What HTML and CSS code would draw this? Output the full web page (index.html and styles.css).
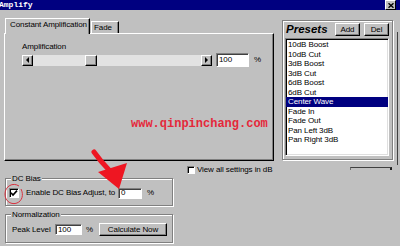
FILE: index.html
```html
<!DOCTYPE html>
<html>
<head>
<meta charset="utf-8">
<title>Amplify</title>
<link rel="stylesheet" href="styles.css">
</head>
<body>
<div class="titlebar">
  <span class="title">Amplify</span>
  <span class="close"><svg width="6" height="5" viewBox="0 0 6 5"><path d="M0.5 0.3 L5.5 4.7 M5.5 0.3 L0.5 4.7" stroke="#000" stroke-width="1.4"/></svg></span>
</div>
<div class="main">
  <div class="left">
    <div class="tabs">
      <div class="tab active">Constant Amplification</div>
      <div class="tab fade">Fade</div>
    </div>
    <div class="panel">
      <div class="label">Amplification</div>
      <div class="amp-row">
        <div class="scrollbar">
          <div class="sbtn"><span class="tri-left"></span></div>
          <div class="track"><div class="thumb"></div></div>
          <div class="sbtn"><span class="tri-right"></span></div>
        </div>
        <div class="field amp-field">100</div>
        <span class="pct">%</span>
      </div>
      <div class="watermark">www.qinpinchang.com</div>
    </div>
    <div class="viewall"><span class="check small"></span><span>View all settings in dB</span></div>
    <div class="group dc">
      <div class="group-title">DC Bias</div>
      <div class="group-row">
        <span class="check checked"><svg width="8" height="8" viewBox="0 0 8 8"><path d="M1 3.8 L3 6 L7 1.6" fill="none" stroke="#000" stroke-width="1.6"/></svg></span>
        <span class="cb-label">Enable DC Bias Adjust, to</span>
        <span class="field dc-field">0</span>
        <span class="pct">%</span>
      </div>
    </div>
    <div class="group norm">
      <div class="group-title">Normalization</div>
      <div class="group-row">
        <span class="peak-label">Peak Level</span>
        <span class="field peak-field">100</span>
        <span class="pct">%</span>
        <span class="btn calc">Calculate Now</span>
      </div>
    </div>
  </div>
  <div class="right">
    <div class="presets">
      <div class="presets-head">
        <span class="presets-title">Presets</span>
        <span class="btn small add">Add</span>
        <span class="btn small">Del</span>
      </div>
      <ul class="list">
        <li>10dB Boost</li>
        <li>10dB Cut</li>
        <li>3dB Boost</li>
        <li>3dB Cut</li>
        <li>6dB Boost</li>
        <li>6dB Cut</li>
        <li class="sel">Center Wave</li>
        <li>Fade In</li>
        <li>Fade Out</li>
        <li>Pan Left 3dB</li>
        <li>Pan Right 3dB</li>
      </ul>
    </div>
    <div class="okedge"></div>
  </div>
  <div class="winedge"></div>
</div>
<svg class="marks" width="400" height="246" viewBox="0 0 400 246">
  <path d="M19 186 C 13 182, 5 186, 5 194 C 5 202, 12 205, 17 203 C 22 201, 24 195, 21 189" fill="none" stroke="#d8303e" stroke-width="1"/>
  <path d="M94 152 Q101 162 110 171" fill="none" stroke="#ee1622" stroke-width="5" stroke-linecap="round"/>
  <polygon points="98,172 127,163 119,189" fill="#ee1622"/>
</svg>
</body>
</html>
```
FILE: styles.css
```css
* { box-sizing: border-box; }
html, body { margin: 0; padding: 0; }
body {
  width: 400px;
  height: 246px;
  overflow: hidden;
  position: relative;
  background: #c0c0c0;
  color: #000;
  font-family: "Liberation Sans", Arial, sans-serif;
  font-size: 8px;
  line-height: 10px;
  letter-spacing: -0.1px;
}

/* title bar */
.titlebar {
  height: 10px;
  background: #000080;
  display: flex;
  justify-content: space-between;
  align-items: flex-start;
}
.title {
  color: #fff;
  font: bold 8px/10px "Liberation Mono", monospace;
  letter-spacing: 0;
  margin-left: -1px;
}
.close {
  width: 11px;
  height: 10px;
  margin-right: 4px;
  background: #c0c0c0;
  border-top: 1px solid #fff;
  border-left: 1px solid #fff;
  border-right: 1px solid #000;
  border-bottom: 1px solid #000;
  display: flex;
  align-items: center;
  justify-content: center;
}
.close svg { display: block; }

/* layout */
.main {
  display: flex;
  align-items: flex-start;
  padding-left: 4px;
}
.left { width: 270px; margin-top: 8px; }
.right { width: 111px; margin-left: 8px; margin-top: 10px; }
.winedge { width: 1px; height: 133px; margin-top: 22px; margin-left: 4px; background: #404040; }

/* tabs */
.tabs {
  display: flex;
  align-items: flex-end;
  height: 15px;
  padding-left: 1px;
}
.tab {
  background: #c0c0c0;
  border-top: 1px solid #fff;
  border-left: 1px solid #fff;
  border-right: 1px solid #000;
  box-shadow: inset -1px 0 #808080;
  padding: 1px 0 0 2px;
  height: 12px;
  white-space: nowrap;
}
.tab.active {
  width: 85px;
  height: 16px;
  margin-bottom: -1px;
  padding-left: 4px;
  position: relative;
  z-index: 1;
}
.tab.fade { width: 28px; margin-left: 1px; }

/* panel */
.panel {
  height: 128px;
  border-top: 1px solid #fff;
  border-left: 1px solid #fff;
  border-right: 1px solid #000;
  border-bottom: 1px solid #000;
  box-shadow: inset -1px -1px #808080;
  padding: 8px 0 0 17px;
}
.amp-row {
  display: flex;
  align-items: center;
  height: 14px;
  margin-top: 1px;
}
.scrollbar {
  display: flex;
  width: 190px;
  height: 11px;
}
.sbtn, .thumb {
  width: 11px;
  height: 11px;
  background: #c0c0c0;
  border-top: 1px solid #fff;
  border-left: 1px solid #fff;
  border-right: 1px solid #000;
  border-bottom: 1px solid #000;
  box-shadow: inset -1px -1px #808080;
  display: flex;
  align-items: center;
  justify-content: center;
}
.track {
  flex: 1;
  height: 11px;
  background: #e2e2e2;
}
.thumb { width: 12px; margin-left: 52px; }
.tri-left {
  width: 0; height: 0;
  border-top: 3px solid transparent;
  border-bottom: 3px solid transparent;
  border-right: 3px solid #000;
}
.tri-right {
  width: 0; height: 0;
  border-top: 3px solid transparent;
  border-bottom: 3px solid transparent;
  border-left: 3px solid #000;
}

.field {
  background: #fff;
  border-top: 1px solid #808080;
  border-left: 1px solid #808080;
  border-right: 1px solid #fff;
  border-bottom: 1px solid #fff;
  box-shadow: inset 1px 1px #404040;
  padding-left: 2px;
  display: flex;
  align-items: center;
}
.amp-field { width: 33px; height: 14px; margin-left: 4px; }
.pct { margin-left: 5px; }

.watermark {
  margin-top: 51px;
  margin-left: 109px;
  font: bold 12px/12px "Liberation Mono", monospace;
  letter-spacing: 0;
  color: #e5283a;
}

/* view all */
.viewall {
  display: flex;
  align-items: center;
  height: 10px;
  margin-top: 4px;
  padding-left: 183px;
}
.check {
  width: 10px;
  height: 10px;
  background: #fff;
  border-top: 1px solid #808080;
  border-left: 1px solid #808080;
  border-right: 1px solid #fff;
  border-bottom: 1px solid #fff;
  box-shadow: inset 1px 1px #000;
  display: flex;
  align-items: center;
  justify-content: center;
}
.check.small { width: 8px; height: 8px; margin-right: 2px; }
.check svg { display: block; }

/* groups */
.group {
  width: 168px;
  margin-left: 1px;
  border: 1px solid #808080;
  box-shadow: 1px 1px 0 #fff, inset 1px 1px 0 #fff;
  padding-bottom: 6px;
}
.dc { margin-top: 3px; }
.norm { margin-top: 8px; }
.group-title {
  width: fit-content;
  margin-top: -5px;
  margin-left: 5px;
  padding: 0 1px;
  line-height: 9px;
  background: #c0c0c0;
}
.group-row {
  display: flex;
  align-items: center;
  height: 12px;
  margin-top: 4px;
  padding-left: 3px;
  white-space: nowrap;
}
.cb-label { width: 92px; margin-left: 7px; }
.dc-field { width: 24px; height: 11px; }

.norm .group-row { height: 13px; padding-left: 6px; }
.peak-label { width: 43px; }
.peak-field { width: 27px; height: 11px; }
.norm .pct { margin-left: 4px; width: 8px; }

.btn {
  background: #c0c0c0;
  border-top: 1px solid #fff;
  border-left: 1px solid #fff;
  border-right: 1px solid #000;
  border-bottom: 1px solid #000;
  box-shadow: inset -1px -1px #808080;
  display: flex;
  align-items: center;
  justify-content: center;
}
.calc { width: 68px; height: 13px; margin-left: 5px; }

/* presets */
.presets {
  height: 140px;
  border: 1px solid #808080;
  box-shadow: 1px 1px 0 #fff, inset 1px 1px 0 #fff;
}
.presets-head {
  display: flex;
  align-items: center;
  height: 13px;
  margin-top: 2px;
  padding-left: 3px;
  padding-right: 3px;
}
.presets-title {
  font-weight: bold;
  font-style: italic;
  font-size: 11.5px;
  letter-spacing: 0;
  line-height: 13px;
}
.btn.small { width: 25px; height: 13px; }
.add { margin-left: auto; margin-right: 4px; }

.list {
  list-style: none;
  margin: 2px 3px 0 2px;
  padding: 1px 0 0 0;
  height: 118px;
  background: #fff;
  border-top: 1px solid #808080;
  border-left: 1px solid #808080;
  border-right: 1px solid #fff;
  border-bottom: 1px solid #fff;
  box-shadow: inset 1px 1px #000, inset -1px -1px #dfdfdf;
}
.list li {
  height: 9.5px;
  line-height: 9.5px;
  padding-left: 2px;
  white-space: nowrap;
}
.list li.sel { background: #000080; color: #fff; }

.okedge {
  width: 42px;
  height: 3px;
  margin-top: 7px;
  margin-left: 68px;
  border-top: 1px solid #404040;
  border-left: 1px solid #707070;
  border-right: 2px solid #202020;
}

/* hand-drawn marks over the screenshot */
.marks {
  position: absolute;
  left: 0;
  top: 0;
  pointer-events: none;
}
```
